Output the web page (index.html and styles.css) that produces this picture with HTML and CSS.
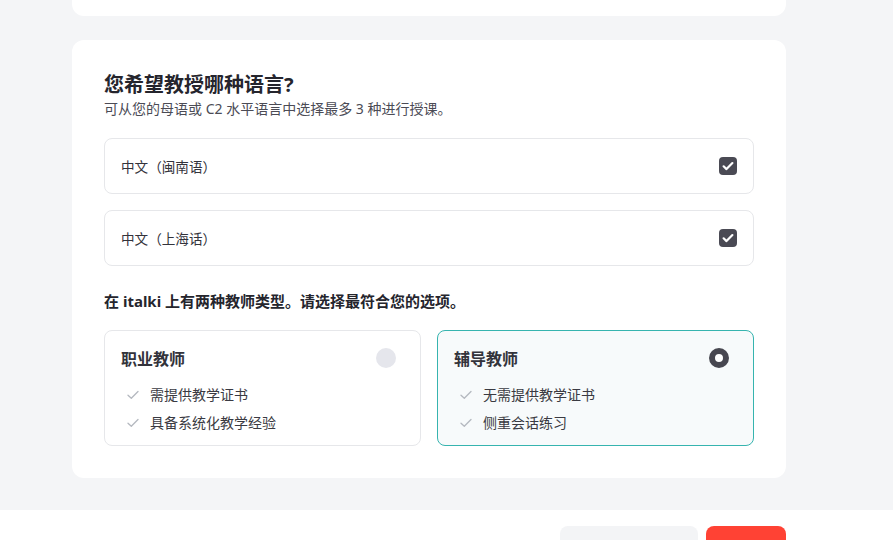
FILE: index.html
```html
<!DOCTYPE html>
<html lang="zh-CN">
<head>
<meta charset="utf-8">
<title>教授语言</title>
<link rel="stylesheet" href="styles.css">
</head>
<body>
<div class="page">
  <div class="wrap">
    <div class="card card-top"></div>
    <section class="card card-main">
      <h1 class="title">您希望教授哪种语言?</h1>
      <p class="subtitle">可从您的母语或 C2 水平语言中选择最多 3 种进行授课。</p>
      <div class="options">
        <label class="option">
          <span class="option-text">中文（闽南语）</span>
          <span class="checkbox">
            <svg viewBox="0 0 18 18" width="18" height="18"><path d="M4.6 9.3l2.9 2.8 5.9-6" fill="none" stroke="#fff" stroke-width="2.2" stroke-linecap="round" stroke-linejoin="round"/></svg>
          </span>
        </label>
        <label class="option">
          <span class="option-text">中文（上海话）</span>
          <span class="checkbox">
            <svg viewBox="0 0 18 18" width="18" height="18"><path d="M4.6 9.3l2.9 2.8 5.9-6" fill="none" stroke="#fff" stroke-width="2.2" stroke-linecap="round" stroke-linejoin="round"/></svg>
          </span>
        </label>
      </div>
      <h2 class="heading">在 italki 上有两种教师类型。请选择最符合您的选项。</h2>
      <div class="types">
        <div class="type">
          <div class="type-head">
            <span class="type-title">职业教师</span>
            <span class="radio"></span>
          </div>
          <ul class="feats">
            <li><svg class="tick" viewBox="0 0 12 10" width="12" height="10"><path d="M1 5.2l3.3 3.1L11 1.5" fill="none" stroke="#b4b8bf" stroke-width="1.3" stroke-linecap="round" stroke-linejoin="round"/></svg>需提供教学证书</li>
            <li><svg class="tick" viewBox="0 0 12 10" width="12" height="10"><path d="M1 5.2l3.3 3.1L11 1.5" fill="none" stroke="#b4b8bf" stroke-width="1.3" stroke-linecap="round" stroke-linejoin="round"/></svg>具备系统化教学经验</li>
          </ul>
        </div>
        <div class="type type-selected">
          <div class="type-head">
            <span class="type-title">辅导教师</span>
            <span class="radio radio-on"></span>
          </div>
          <ul class="feats">
            <li><svg class="tick" viewBox="0 0 12 10" width="12" height="10"><path d="M1 5.2l3.3 3.1L11 1.5" fill="none" stroke="#b4b8bf" stroke-width="1.3" stroke-linecap="round" stroke-linejoin="round"/></svg>无需提供教学证书</li>
            <li><svg class="tick" viewBox="0 0 12 10" width="12" height="10"><path d="M1 5.2l3.3 3.1L11 1.5" fill="none" stroke="#b4b8bf" stroke-width="1.3" stroke-linecap="round" stroke-linejoin="round"/></svg>侧重会话练习</li>
          </ul>
        </div>
      </div>
    </section>
  </div>
  <footer class="footer">
    <div class="wrap footer-inner">
      <button class="btn btn-gray">保存草稿并退出</button>
      <button class="btn btn-red">下一步</button>
    </div>
  </footer>
</div>
</body>
</html>
```

FILE: styles.css
```css
html, body {
  margin: 0;
  padding: 0;
}
body {
  background: #f4f5f7;
  font-family: "Noto Sans", "Noto Sans CJK SC", sans-serif;
  color: #2b2b33;
  overflow: hidden;
  height: 540px;
}
.page {
  display: flex;
  flex-direction: column;
}
.wrap {
  width: 714px;
  margin-left: 72px;
}
.card {
  background: #fff;
  border-radius: 12px;
}
.card-top {
  height: 16px;
  border-radius: 0 0 12px 12px;
}
.card-main {
  margin-top: 24px;
  padding: 32px;
}
.title {
  margin: 0;
  font-size: 20px;
  line-height: 26px;
  font-weight: 700;
  color: #25252d;
}
.subtitle {
  margin: 1px 0 0;
  font-size: 14px;
  line-height: 20px;
  color: #4b4b55;
}
.options {
  margin-top: 19px;
  display: flex;
  flex-direction: column;
  gap: 16px;
}
.option {
  height: 54px;
  border: 1px solid #e6e7ea;
  border-radius: 8px;
  display: flex;
  align-items: center;
  justify-content: space-between;
  padding: 0 16px;
}
.option-text {
  font-size: 13.6px;
  color: #33333b;
}
.checkbox {
  width: 18px;
  height: 18px;
  border-radius: 4px;
  background: #4a4a54;
  display: flex;
}
.heading {
  margin: 24px 0 0;
  font-size: 15px;
  line-height: 22px;
  font-weight: 700;
  color: #25252d;
}
.types {
  margin-top: 18px;
  display: grid;
  grid-template-columns: 1fr 1fr;
  gap: 16px;
}
.type {
  border: 1px solid #e6e7ea;
  border-radius: 8px;
  padding: 17px 24px 12px 16px;
  height: 116px;
  box-sizing: border-box;
}
.type-selected {
  border-color: #36b4af;
  background: #f7fafb;
}
.type-head {
  display: flex;
  justify-content: space-between;
  align-items: center;
  height: 20px;
}
.type-title {
  font-size: 16px;
  font-weight: 700;
  color: #33333b;
}
.radio {
  width: 20px;
  height: 20px;
  border-radius: 50%;
  background: #e5e6ec;
  box-sizing: border-box;
}
.radio-on {
  background: #fff;
  border: 6px solid #474750;
}
.feats {
  list-style: none;
  margin: 17px 0 0;
  padding: 0 0 0 6px;
  display: flex;
  flex-direction: column;
  gap: 8px;
}
.feats li {
  display: flex;
  align-items: center;
  font-size: 14px;
  line-height: 20px;
  color: #3a3a42;
}
.tick {
  margin-right: 11px;
  flex: none;
}
.footer {
  margin-top: 32px;
  background: #fff;
  height: 60px;
}
.footer-inner {
  display: flex;
  justify-content: flex-end;
  gap: 8px;
  padding-top: 16px;
}
.btn {
  border: 0;
  height: 40px;
  border-radius: 8px;
  font-family: "Noto Sans", "Noto Sans CJK SC", sans-serif;
  font-size: 14px;
  font-weight: 700;
  padding: 0 16px;
}
.btn-gray {
  width: 138px;
  background: #f3f4f6;
  color: #3a3a42;
}
.btn-red {
  width: 80px;
  background: #ff4234;
  color: #fff;
}
```
